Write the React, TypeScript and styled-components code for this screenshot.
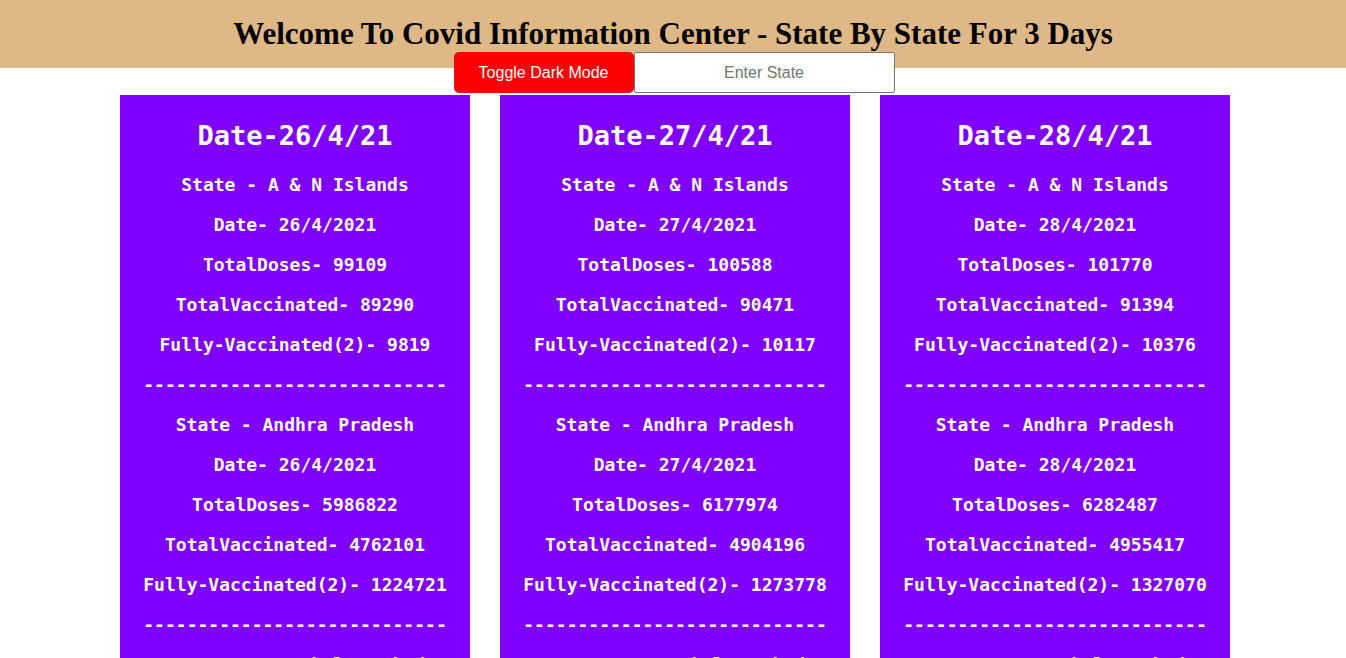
import React from "react";
import styled, { createGlobalStyle } from "styled-components";

const GlobalStyle = createGlobalStyle`
  body {
    margin: 0;
    background: #fff;
    font-family: "Liberation Sans", Arial, sans-serif;
  }
`;

const Header = styled.header`
  background-color: #deb887;
  height: 68px;
  display: flex;
  justify-content: center;
  align-items: center;
`;

const Title = styled.h1`
  margin: 0;
  font-family: "Liberation Serif", "Times New Roman", serif;
  font-weight: bold;
  font-size: 31px;
  color: #000;
`;

const Controls = styled.div`
  display: flex;
  justify-content: center;
  margin-top: -16px;
  padding-left: 2px;
`;

const ToggleButton = styled.button`
  width: 180px;
  height: 41px;
  background: #ff0000;
  color: #fff;
  border: none;
  border-radius: 5px;
  font-family: "Liberation Sans", Arial, sans-serif;
  font-size: 16px;
  cursor: pointer;
`;

const StateInput = styled.input`
  width: 261px;
  height: 41px;
  box-sizing: border-box;
  border: 1px solid #767676;
  border-radius: 2px;
  text-align: center;
  font-family: "Liberation Sans", Arial, sans-serif;
  font-size: 16px;
  &::placeholder {
    color: #757575;
  }
`;

const Cards = styled.div`
  display: flex;
  justify-content: center;
  gap: 30px;
  margin-top: 2px;
  padding-left: 4px;
`;

const Card = styled.div`
  width: 350px;
  background-color: #8000ff;
  color: #fff;
  padding-top: 21px;
  text-align: center;
  font-family: "DejaVu Sans Mono", "Liberation Mono", monospace;
  font-weight: bold;
`;

const DayHeading = styled.h2`
  margin: 0 0 9px;
  line-height: 40px;
  font-size: 27px;
`;

const Line = styled.p`
  margin: 0;
  line-height: 40px;
  font-size: 18px;
  white-space: pre;
`;

type Entry = {
  state: string;
  total: number;
  vaccinated: number;
  fully: number;
};

type Day = {
  short: string;
  full: string;
  entries: Entry[];
};

const days: Day[] = [
  {
    short: "26/4/21",
    full: "26/4/2021",
    entries: [
      { state: "A & N Islands", total: 99109, vaccinated: 89290, fully: 9819 },
      { state: "Andhra Pradesh", total: 5986822, vaccinated: 4762101, fully: 1224721 },
      { state: "Arunachal Pradesh", total: 285112, vaccinated: 236718, fully: 48394 },
    ],
  },
  {
    short: "27/4/21",
    full: "27/4/2021",
    entries: [
      { state: "A & N Islands", total: 100588, vaccinated: 90471, fully: 10117 },
      { state: "Andhra Pradesh", total: 6177974, vaccinated: 4904196, fully: 1273778 },
      { state: "Arunachal Pradesh", total: 289431, vaccinated: 239870, fully: 49561 },
    ],
  },
  {
    short: "28/4/21",
    full: "28/4/2021",
    entries: [
      { state: "A & N Islands", total: 101770, vaccinated: 91394, fully: 10376 },
      { state: "Andhra Pradesh", total: 6282487, vaccinated: 4955417, fully: 1327070 },
      { state: "Arunachal Pradesh", total: 293207, vaccinated: 242615, fully: 50592 },
    ],
  },
];

const DASHES = "----------------------------";

export default function App() {
  return (
    <>
      <GlobalStyle />
      <Header>
        <Title>Welcome To Covid Information Center - State By State For 3 Days</Title>
      </Header>
      <Controls>
        <ToggleButton>Toggle Dark Mode</ToggleButton>
        <StateInput placeholder="Enter State" />
      </Controls>
      <Cards>
        {days.map((day) => (
          <Card key={day.short}>
            <DayHeading>Date-{day.short}</DayHeading>
            {day.entries.map((e) => (
              <React.Fragment key={e.state}>
                <Line>State - {e.state}</Line>
                <Line>Date- {day.full}</Line>
                <Line>TotalDoses- {e.total}</Line>
                <Line>TotalVaccinated- {e.vaccinated}</Line>
                <Line>Fully-Vaccinated(2)- {e.fully}</Line>
                <Line>{DASHES}</Line>
              </React.Fragment>
            ))}
          </Card>
        ))}
      </Cards>
    </>
  );
}
